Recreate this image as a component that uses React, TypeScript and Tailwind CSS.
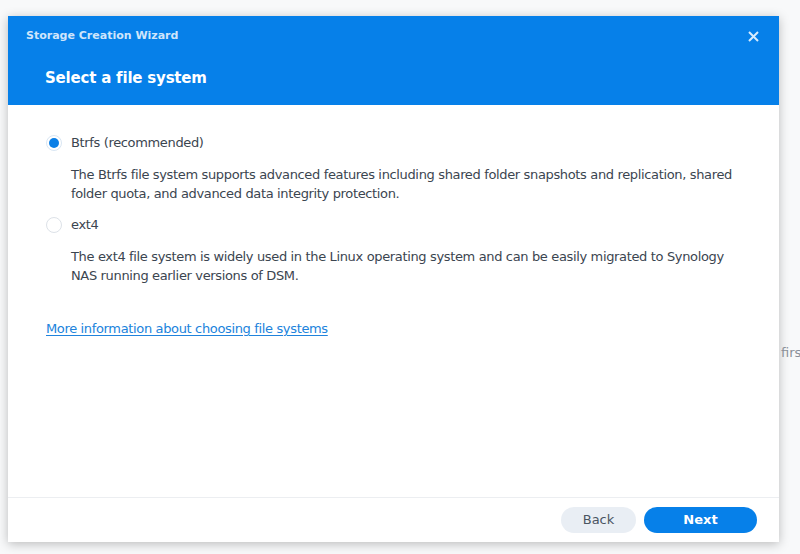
function Radio({ checked }: { checked: boolean }) {
  return (
    <span
      className={`flex h-[16px] w-[16px] shrink-0 items-center justify-center rounded-full border bg-white ${
        checked ? "border-[#d9e6f3]" : "border-[#dde2e8]"
      }`}
    >
      {checked && <span className="h-[10px] w-[10px] rounded-full bg-[#0a7fe6]" />}
    </span>
  );
}

function Option({
  label,
  checked,
  children,
}: {
  label: string;
  checked: boolean;
  children: React.ReactNode;
}) {
  return (
    <div>
      <label className="flex h-[20px] items-center gap-[9px]">
        <Radio checked={checked} />
        <span className="text-[13px] tracking-[-0.35px] text-[#3b4550]">{label}</span>
      </label>
      <p className="mt-[12px] pl-[25px] pr-[36px] text-[13px] leading-[19px] tracking-[-0.35px] text-[#3b4550]">
        {children}
      </p>
    </div>
  );
}

export default function App() {
  return (
    <div
      className="flex h-[554px] w-[800px] overflow-hidden bg-[#f8f9fa] pt-[16px] pl-[8px]"
      style={{ fontFamily: '"DejaVu Sans", Verdana, sans-serif' }}
    >
      <div className="flex h-[526px] w-[771px] shrink-0 flex-col bg-white shadow-[0_2px_10px_rgba(0,0,0,0.25)]">
        <div className="h-[89px] bg-[#0680e9]">
          <div className="flex items-center justify-between pl-[18px] pr-[20px] pt-[12px]">
            <span className="text-[11px] font-bold text-[#cfe5fb]">
              Storage Creation Wizard
            </span>
            <svg width="11" height="11" viewBox="0 0 11 11" className="mt-[1px]">
              <path d="M1 1L10 10M10 1L1 10" stroke="#d8ecfd" strokeWidth="2" />
            </svg>
          </div>
          <h1 className="mt-[22px] pl-[37px] text-[15px] font-bold tracking-[-0.2px] text-white">
            Select a file system
          </h1>
        </div>

        <div className="flex flex-1 flex-col pl-[38px] pt-[28px]">
          <div className="flex flex-col gap-[12px]">
            <Option label="Btrfs (recommended)" checked>
              The Btrfs file system supports advanced features including shared folder
              snapshots and replication, shared folder quota, and advanced data integrity
              protection.
            </Option>
            <Option label="ext4" checked={false}>
              The ext4 file system is widely used in the Linux operating system and can be
              easily migrated to Synology NAS running earlier versions of DSM.
            </Option>
          </div>
          <a
            href="#"
            className="mt-[34px] self-start text-[13px] tracking-[-0.35px] text-[#2083dc] underline underline-offset-2"
          >
            More information about choosing file systems
          </a>
        </div>

        <div className="flex h-[45px] items-center justify-end gap-[8px] border-t border-[#eceef1] pr-[22px]">
          <button className="h-[26px] w-[75px] rounded-full bg-[#e9eef4] text-[13px] text-[#4a5562]">
            Back
          </button>
          <button className="h-[26px] w-[113px] rounded-full bg-[#0680e9] text-[13px] font-semibold text-white">
            Next
          </button>
        </div>
      </div>
      <div className="mt-[327px] pl-[2px] text-[13px] text-[#8a9098]">first</div>
    </div>
  );
}
